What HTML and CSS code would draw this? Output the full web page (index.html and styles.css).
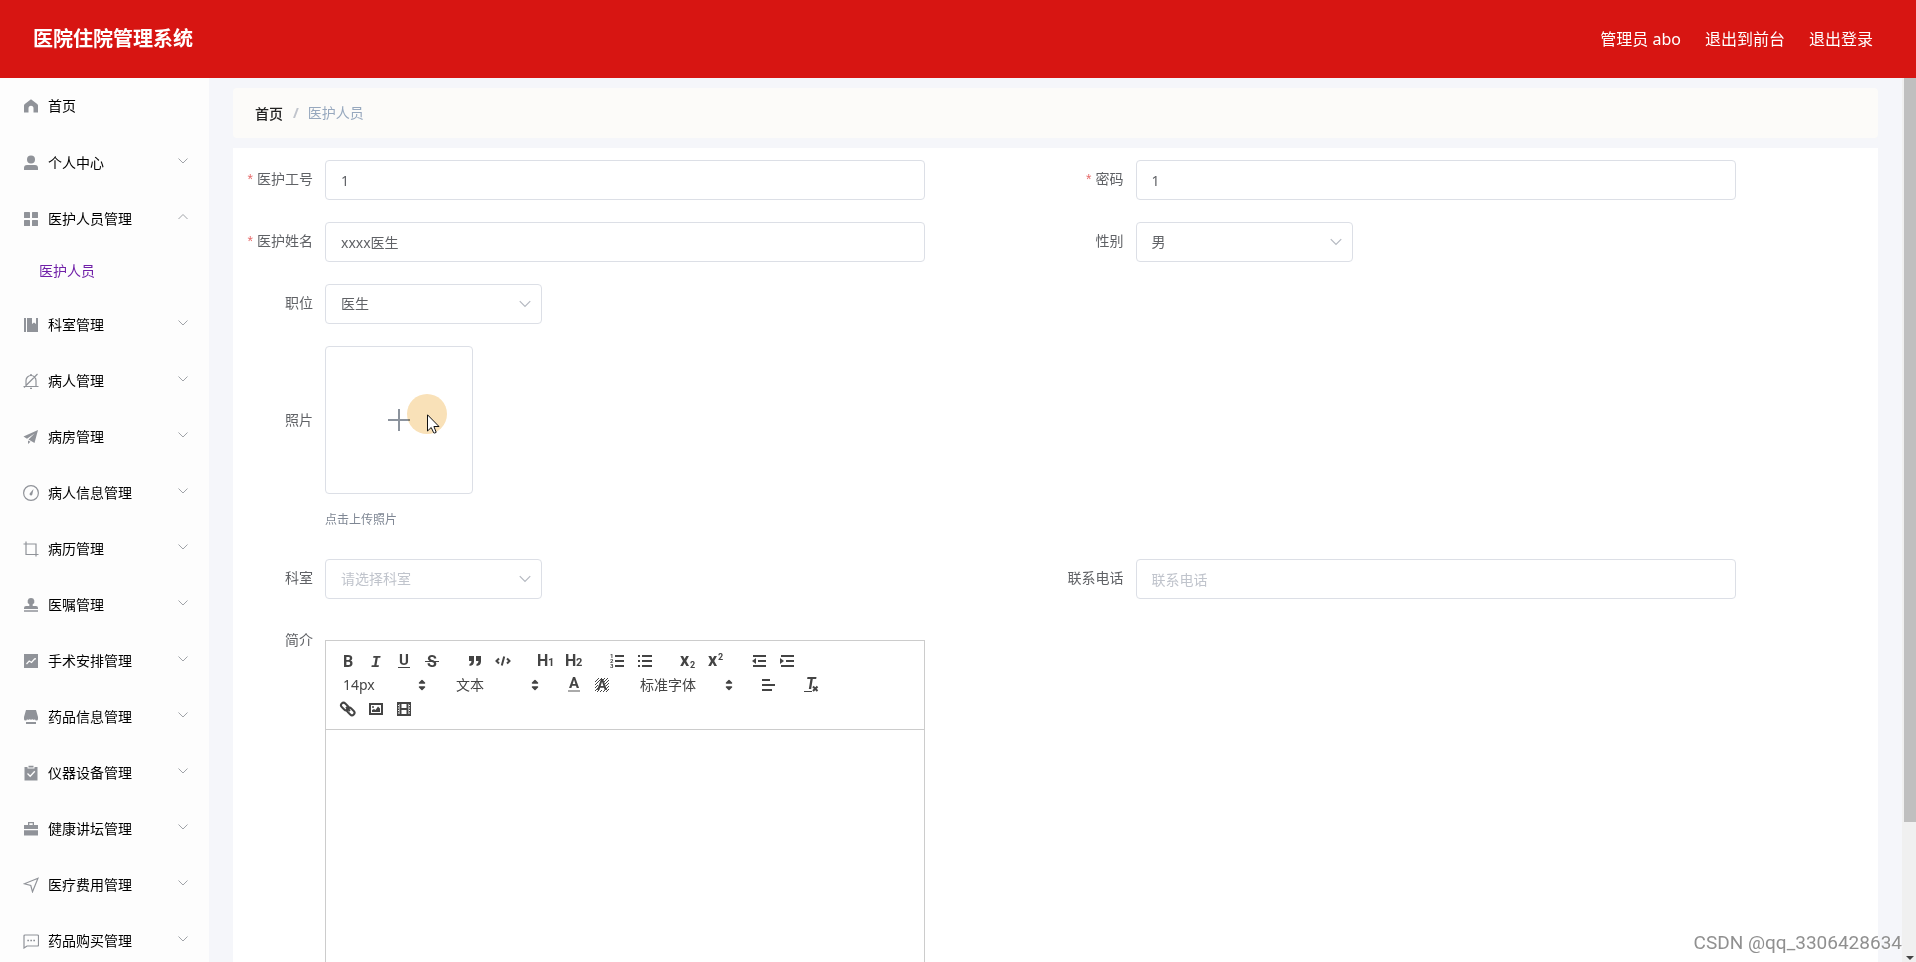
FILE: index.html
```html
<!DOCTYPE html>
<html lang="zh-CN">
<head>
<meta charset="utf-8">
<title>医院住院管理系统</title>
<link rel="stylesheet" href="styles.css">
</head>
<body>
<svg class="defs" aria-hidden="true">
  <symbol id="down" viewBox="0 0 12 12"><path d="M1.500 3.500 6 8l4.500-4.500" fill="none" stroke="currentColor"/></symbol>
  <symbol id="up" viewBox="0 0 12 12"><path d="M1.500 8 6 3.500 10.500 8" fill="none" stroke="currentColor"/></symbol>
  <symbol id="sort" viewBox="0 0 18 18"><path d="M6.500 7 9 4.500 11.500 7zM6.500 11 9 13.500 11.500 11z" fill="currentColor" stroke="currentColor" stroke-width="1.500" stroke-linejoin="round"/></symbol>
</svg>

<header class="topbar">
  <h1 class="brand">医院住院管理系统</h1>
  <nav class="account">
    <span>管理员 abo</span>
    <a href="#front">退出到前台</a>
    <a href="#logout">退出登录</a>
  </nav>
</header>

<div class="shell">
  <nav class="sidebar">
    <a class="item home" href="#home"><svg class="ico" viewBox="0 0 16 16"><path d="M8 1.300 14.200 6c.500.400.800.900.800 1.500v7H10.500V10.300a2.500 2.500 0 0 0-5 0v4.200H1v-7c0-.600.300-1.100.800-1.500z"/></svg><span>首页</span></a>
    <button class="item" type="button"><svg class="ico" viewBox="0 0 16 16"><circle cx="8" cy="4.500" r="4"/><path d="M1 15v-2a3 3 0 0 1 3-3h8a3 3 0 0 1 3 3v2z"/></svg><span>个人中心</span><svg class="arrow"><use href="#down"/></svg></button>
    <button class="item" type="button"><svg class="ico" viewBox="0 0 16 16"><rect x="1" y="1" width="6" height="6" rx=".5"/><rect x="9" y="1" width="6" height="6" rx=".5"/><rect x="1" y="9" width="6" height="6" rx=".5"/><rect x="9" y="9" width="6" height="6" rx=".5"/></svg><span>医护人员管理</span><svg class="arrow"><use href="#up"/></svg></button>
    <a class="subitem" href="#staff">医护人员</a>
    <button class="item" type="button"><svg class="ico" viewBox="0 0 16 16"><path d="M1 1h2v14H1zM4 1h5v6l2-1.500L13 7V1h2v14H4z"/></svg><span>科室管理</span><svg class="arrow"><use href="#down"/></svg></button>
    <button class="item" type="button"><svg class="ico line" viewBox="0 0 16 16"><path d="M.500 13.500h15M3 13.500V7.500a5 5 0 0 1 10 0v6M7 1.800h2M7 15.300h2M1 14.500 14.500 1"/></svg><span>病人管理</span><svg class="arrow"><use href="#down"/></svg></button>
    <button class="item" type="button"><svg class="ico" viewBox="0 0 16 16"><path d="M15 1 .500 7.500 4 9.700 11.500 4.500 5.500 10.500 11.500 14zM5 11.500V15l2.500-2.200z"/></svg><span>病房管理</span><svg class="arrow"><use href="#down"/></svg></button>
    <button class="item" type="button"><svg class="ico line" viewBox="0 0 16 16"><circle cx="8" cy="8" r="7.400"/><path d="M10.500 4 9.400 9a1.400 1.400 0 1 1-2.300-1.100z" fill="currentColor" stroke="none"/></svg><span>病人信息管理</span><svg class="arrow"><use href="#down"/></svg></button>
    <button class="item" type="button"><svg class="ico line" viewBox="0 0 16 16"><path d="M.500 3H13v12.500M3 .500V13.500h12.500"/></svg><span>病历管理</span><svg class="arrow"><use href="#down"/></svg></button>
    <button class="item" type="button"><svg class="ico" viewBox="0 0 16 16"><path d="M8 1a3.300 3.300 0 0 1 1.700 6.200V9H13a2 2 0 0 1 2 2v1H1v-1a2 2 0 0 1 2-2h3.300V7.200A3.300 3.300 0 0 1 8 1zM1 13.200h14v1.500H1z"/></svg><span>医嘱管理</span><svg class="arrow"><use href="#down"/></svg></button>
    <button class="item" type="button"><svg class="ico" viewBox="0 0 16 16"><rect x="1" y="1" width="14" height="14"/><path class="cut" d="m3.500 11 2.700-3 2.300 1.500 3.500-4M12 5.800h1"/></svg><span>手术安排管理</span><svg class="arrow"><use href="#down"/></svg></button>
    <button class="item" type="button"><svg class="ico" viewBox="0 0 16 16"><path d="M3 1h10l2 7v2a1.500 1.500 0 0 1-3 0 1.500 1.500 0 0 1-2.700 0 1.500 1.500 0 0 1-2.600 0 1.500 1.500 0 0 1-2.700 0 1.500 1.500 0 0 1-3 0V8zM3 13h10v2H3z"/></svg><span>药品信息管理</span><svg class="arrow"><use href="#down"/></svg></button>
    <button class="item" type="button"><svg class="ico" viewBox="0 0 16 16"><path d="M1.500 2h3v1.500h7V2h3v13.500h-13zM5.500.800h5v1.700h-5z"/><path class="cut" d="m4.500 8.500 2.700 2.700 4.600-5"/></svg><span>仪器设备管理</span><svg class="arrow"><use href="#down"/></svg></button>
    <button class="item" type="button"><svg class="ico" viewBox="0 0 16 16"><path d="M1 4h4V1h6v3h4v4H1zM6.300 2.300V4h3.400V2.300zM1 9.300h14v5.200H1z" fill-rule="evenodd"/></svg><span>健康讲坛管理</span><svg class="arrow"><use href="#down"/></svg></button>
    <button class="item" type="button"><svg class="ico line" viewBox="0 0 16 16"><path d="M15 1.200 1.300 6.800l6.500 1.700 1.700 6.300z"/></svg><span>医疗费用管理</span><svg class="arrow"><use href="#down"/></svg></button>
    <button class="item" type="button"><svg class="ico line" viewBox="0 0 16 16"><path d="M2 2h12.500q1 0 1 1v9q0 1-1 1H4l-3 2V3q0-1 1-1z"/><path d="M4.300 7.500H6M7.300 7.500H9M10.300 7.500H12" stroke-width="1.600"/></svg><span>药品购买管理</span><svg class="arrow"><use href="#down"/></svg></button>
  </nav>

  <main class="content">
    <nav class="crumbs" aria-label="面包屑"><a href="#home">首页</a><span class="slash">/</span><span>医护人员</span></nav>

    <form class="panel">
      <div class="field"><label class="label required" for="no">医护工号</label><input class="control" id="no" type="text" value="1"></div>
      <div class="field"><label class="label required" for="pw">密码</label><input class="control" id="pw" type="text" value="1"></div>
      <div class="field"><label class="label required" for="name">医护姓名</label><input class="control" id="name" type="text" value="xxxx医生"></div>
      <div class="field"><label class="label" for="sex">性别</label><div class="choice"><select class="control" id="sex"><option>男</option><option>女</option></select><svg class="caret"><use href="#down"/></svg></div></div>
      <div class="field wide"><label class="label" for="job">职位</label><div class="choice"><select class="control" id="job"><option>医生</option><option>护士</option></select><svg class="caret"><use href="#down"/></svg></div></div>
      <div class="field wide"><label class="label photo-label" for="photo">照片</label>
        <div>
          <button class="upload" id="photo" type="button" aria-label="上传照片">
            <svg class="plus" viewBox="0 0 24 24"><path d="M12 1v22M1 12h22"/></svg>
            <span class="halo"></span>
            <svg class="pointer" viewBox="0 0 13 20"><path d="M.500.800V17l3.700-3.500 2.500 5.300q1 .700 2.500-.500L6.900 12.500H12z"/></svg>
          </button>
          <p class="hint">点击上传照片</p>
        </div>
      </div>
      <div class="field"><label class="label" for="dept">科室</label><div class="choice"><select class="control empty" id="dept"><option>请选择科室</option></select><svg class="caret"><use href="#down"/></svg></div></div>
      <div class="field"><label class="label" for="tel">联系电话</label><input class="control" id="tel" type="text" placeholder="联系电话"></div>
      <div class="field wide"><label class="label" for="intro">简介</label>
        <div class="editor">
          <div class="toolbar">
            <div class="group">
              <button type="button" aria-label="粗体"><svg viewBox="0 0 18 18"><text class="g" x="4" y="14.500">B</text></svg></button>
              <button type="button" aria-label="斜体"><svg viewBox="0 0 18 18"><text class="g it" x="4" y="14.500">I</text></svg></button>
              <button type="button" aria-label="下划线"><svg viewBox="0 0 18 18"><text class="g md" x="4" y="13">U</text><path class="s thin" d="M3 15.500h12"/></svg></button>
              <button type="button" aria-label="删除线"><svg viewBox="0 0 18 18"><text class="g" x="4" y="14.500">S</text><path class="s thin" d="M2 9.500h14"/></svg></button>
            </div>
            <div class="group">
              <button type="button" aria-label="引用"><svg viewBox="0 0 18 18"><path class="f" d="M3 4h5v5.500q0 4-4.500 4.500v-2Q5.500 11.500 5.500 9H3zM10 4h5v5.500q0 4-4.500 4.500v-2q2-.500 2-3H10z"/></svg></button>
              <button type="button" aria-label="代码"><svg viewBox="0 0 18 18"><path class="s" d="M5 6.500 2.500 9 5 11.500M13 6.500 15.500 9 13 11.500M10.200 4.500 7.800 13.500"/></svg></button>
            </div>
            <div class="group">
              <button type="button" aria-label="标题一"><svg viewBox="0 0 18 18"><text class="g" x="0" y="14">H</text><text class="g sm" x="11" y="14">1</text></svg></button>
              <button type="button" aria-label="标题二"><svg viewBox="0 0 18 18"><text class="g" x="0" y="14">H</text><text class="g sm" x="11" y="14">2</text></svg></button>
            </div>
            <div class="group">
              <button type="button" aria-label="有序列表"><svg viewBox="0 0 18 18"><path class="s" d="M7 4h9M7 9h9M7 14h9"/><text class="g xs" x="2" y="6">1</text><text class="g xs" x="2" y="11">2</text><text class="g xs" x="2" y="16">3</text></svg></button>
              <button type="button" aria-label="无序列表"><svg viewBox="0 0 18 18"><path class="s" d="M6 4h10M6 9h10M6 14h10M2 4h2M2 9h2M2 14h2"/></svg></button>
            </div>
            <div class="group">
              <button type="button" aria-label="下标"><svg viewBox="0 0 18 18"><text class="g lg" x="1" y="14">x</text><text class="g sub" x="11" y="16">2</text></svg></button>
              <button type="button" aria-label="上标"><svg viewBox="0 0 18 18"><text class="g lg" x="1" y="14">x</text><text class="g sub" x="11" y="8">2</text></svg></button>
            </div>
            <div class="group">
              <button type="button" aria-label="减少缩进"><svg viewBox="0 0 18 18"><path class="s" d="M3 4h13M8 9h8M3 14h13"/><path class="f" d="M6 6v6L2 9z"/></svg></button>
              <button type="button" aria-label="增加缩进"><svg viewBox="0 0 18 18"><path class="s" d="M3 4h13M8 9h8M3 14h13"/><path class="f" d="M2 6v6l4-3z"/></svg></button>
            </div>
            <div class="picker"><select aria-label="字号"><option>14px</option></select><svg class="sort"><use href="#sort"/></svg></div>
            <div class="picker"><select aria-label="标题"><option>文本</option></select><svg class="sort"><use href="#sort"/></svg></div>
            <div class="group">
              <button type="button" aria-label="文字颜色"><svg viewBox="0 0 18 18"><text class="g md" x="4" y="12">A</text><path d="M3 15h12" stroke="#aaa" stroke-width="2"/></svg></button>
              <button type="button" aria-label="背景颜色"><svg viewBox="0 0 18 18"><path class="s hatch" d="M2 6 6 2M2 9l7-7M2 12l3-3M8 6l4-4M2 15l4-4M11 6l4-4M4 16l2-2M12 8l4-4M7 16l2-2M13 10l3-3M10 16l2-2M13 13l3-3M13 16l3-3"/><text class="g md" x="4" y="14">A</text></svg></button>
            </div>
            <div class="picker font"><select aria-label="字体"><option>标准字体</option></select><svg class="sort"><use href="#sort"/></svg></div>
            <div class="group"><button type="button" aria-label="对齐"><svg viewBox="0 0 18 18"><path class="s" d="M3 4h8M3 9h13M3 14h10"/></svg></button></div>
            <div class="group"><button type="button" aria-label="清除格式"><svg viewBox="0 0 18 18"><text class="g obl" x="4" y="13">T</text><path class="s thin" d="M2 15.500h8"/><path class="s" d="m11 10.500 4.500 4.500M15.500 10.500 11 15"/></svg></button></div>
            <div class="group">
              <button type="button" aria-label="链接"><svg viewBox="0 0 18 18"><g class="s"><rect x="1.500" y="4" width="8.500" height="5" rx="2.500" transform="rotate(45 5.800 6.500)"/><rect x="7.500" y="9" width="8.500" height="5" rx="2.500" transform="rotate(45 11.800 11.500)"/><path d="m7 7 4 4"/></g></svg></button>
              <button type="button" aria-label="图片"><svg viewBox="0 0 18 18"><rect class="s" x="3" y="4" width="12" height="10"/><circle class="f" cx="6" cy="7" r="1"/><path class="f" d="M5 12v-2l2-1 1.500 1L11 6.500l2 2V12z"/></svg></button>
              <button type="button" aria-label="视频"><svg viewBox="0 0 18 18"><rect class="s" x="3" y="3" width="12" height="12"/><path class="s" d="M5.500 3v12M12.500 3v12M5 9h8"/><path d="M3.500 5v9M14.500 5v9" stroke="#fff" stroke-dasharray="1 1.500"/></svg></button>
            </div>
          </div>
          <textarea class="text" id="intro"></textarea>
        </div>
      </div>
    </form>
  </main>

  <div class="track" aria-hidden="true"><div class="thumb"></div><div class="rest"><svg viewBox="0 0 8 4"><path d="M0 0h8L4 4z"/></svg></div></div>
</div>
<div class="watermark">CSDN @qq_3306428634</div>
</body>
</html>
```

FILE: styles.css
```css
* { box-sizing: border-box; }
body {
  margin: 0;
  height: 100vh;
  display: flex;
  flex-direction: column;
  overflow: hidden;
  font: 14px/20px "Noto Sans", "Noto Sans CJK SC", sans-serif;
  color: #606266;
}
a { color: inherit; text-decoration: none; }
button, input, select, textarea { font: inherit; color: inherit; }
button { border: 0; background: none; padding: 0; cursor: pointer; }
.defs { position: absolute; width: 0; height: 0; }

.topbar {
  flex: none;
  height: 78px;
  padding: 0 43px 0 33px;
  display: flex;
  align-items: center;
  justify-content: space-between;
  background: #d71512;
  color: #fff;
}
.brand { margin: 0; font-size: 20px; line-height: 28px; font-weight: 700; }
.account { display: flex; gap: 24px; font-size: 16px; line-height: 24px; }

.shell { flex: 1; min-height: 0; display: flex; background: #f5f6fa; }

.sidebar {
  flex: none;
  width: 209px;
  overflow: hidden;
  background: #fdfdfd;
  color: #000;
}
.item {
  display: flex;
  align-items: center;
  width: 100%;
  height: 56px;
  padding: 0 20px 0 23px;
  gap: 9px;
  text-align: left;
}
.home { margin-bottom: 1px; }
.item span { flex: 1; }
.ico { width: 16px; height: 16px; color: #909399; fill: currentColor; }
.line { fill: none; stroke: currentColor; stroke-width: 1.2px; }
.cut { fill: none; stroke: #fdfdfd; stroke-width: 1.3px; }
.arrow { width: 12px; height: 12px; margin-bottom: 4px; color: #a0a3a8; }
.subitem {
  display: block;
  height: 50px;
  padding-left: 39px;
  line-height: 48px;
  color: #7020a8;
}

.content {
  flex: 1;
  min-width: 0;
  padding: 10px 24px 0;
  display: flex;
  flex-direction: column;
  gap: 10px;
  overflow: hidden;
}
.crumbs {
  flex: none;
  display: flex;
  align-items: center;
  height: 50px;
  padding: 0 22px;
  border-radius: 4px;
  background: #fcfbf9;
  color: #97a8be;
}
.crumbs a { color: #222; font-weight: 500; font-family: "Noto Sans CJK SC", sans-serif; }
.slash { margin: 0 9px 0 10px; font-weight: 700; color: #c0c4cc; }

.panel {
  flex: 1 0 auto;
  display: grid;
  grid-template-columns: 1fr 1fr;
  row-gap: 22px;
  align-content: start;
  padding: 12px 12px 0;
  background: #fff;
}
.field { display: flex; align-items: flex-start; min-width: 0; }
.wide { grid-column: 1 / -1; }
.label {
  flex: none;
  display: flex;
  justify-content: flex-end;
  width: 80px;
  padding-right: 12px;
  line-height: 38px;
  white-space: nowrap;
}
.required::before { content: "*"; margin-right: 4px; font-family: "Liberation Sans", sans-serif; color: #e66a6a; }
.photo-label { line-height: 148px; }
.control {
  width: 600px;
  max-width: 100%;
  height: 40px;
  padding: 0 15px;
  border: 1px solid #dcdfe6;
  border-radius: 4px;
  background: #fff;
  outline: 0;
}
.control::placeholder { color: #c0c4cc; opacity: 1; }
.empty { color: #c0c4cc; }
.choice { position: relative; width: 217px; }
select { appearance: none; }
.choice .control { width: 100%; }
.caret {
  position: absolute;
  right: 10px;
  top: 13px;
  width: 14px;
  height: 14px;
  color: #b4b8c0;
  pointer-events: none;
}

.upload {
  position: relative;
  display: flex;
  align-items: center;
  justify-content: center;
  width: 148px;
  height: 148px;
  border: 1px solid #dcdfe6;
  border-radius: 4px;
}
.plus { width: 24px; height: 24px; stroke: #8c939d; stroke-width: 2px; }
.halo {
  position: absolute;
  left: 81px;
  top: 47px;
  width: 40px;
  height: 40px;
  border-radius: 50%;
  background: #f9e1b8;
  mix-blend-mode: multiply;
}
.pointer {
  position: absolute;
  left: 101px;
  top: 67px;
  width: 13px;
  height: 20px;
  fill: #fff;
  stroke: #111;
}
.hint { margin: 8px 0 0; font-size: 12px; line-height: 35px; color: #7f8794; }

.editor { width: 600px; margin-top: 19px; border: 1px solid #ccc; }
.toolbar {
  display: flex;
  flex-wrap: wrap;
  padding: 8px;
  border-bottom: 1px solid #ccc;
  color: #444;
}
.group { display: flex; margin-right: 15px; }
.group button { width: 28px; height: 24px; padding: 3px 5px; }
.group svg { display: block; width: 18px; height: 18px; }
.f { fill: #444; }
.s { fill: none; stroke: #444; stroke-width: 2px; }
.thin, .hatch { stroke-width: 1px; }
.g { fill: #444; font: 700 16px Roboto, sans-serif; }
.lg { font-size: 18px; }
.md { font-size: 15px; }
.sm { font-size: 11px; }
.sub { font-size: 9px; }
.xs { font-size: 6px; }
.it { font: italic 700 16px "Liberation Mono", monospace; }
.obl { font-style: italic; }
.picker { position: relative; width: 98px; height: 24px; margin-right: 15px; }
.font { width: 108px; }
.picker select {
  display: block;
  width: 100%;
  height: 24px;
  padding: 0 20px 0 9px;
  border: 0;
  background: none;
}
.sort { position: absolute; right: 1px; top: 3px; width: 18px; height: 18px; pointer-events: none; }
.text { display: block; width: 100%; height: 400px; padding: 12px 15px; border: 0; outline: 0; resize: none; }

.track { flex: none; width: 14px; padding-left: 2px; display: flex; flex-direction: column; background: #f0f0f0; }
.thumb { flex: 744; background: #bfbfbf; }
.rest { flex: 138; display: flex; align-items: flex-end; justify-content: center; padding-bottom: 2px; }
.rest svg { width: 8px; height: 4px; fill: #444; }

.watermark {
  position: fixed;
  right: 14px;
  bottom: 7px;
  font: 19px/24px Roboto, sans-serif;
  color: #909090;
  text-shadow: 1px 1px 0 #fff;
}
```
